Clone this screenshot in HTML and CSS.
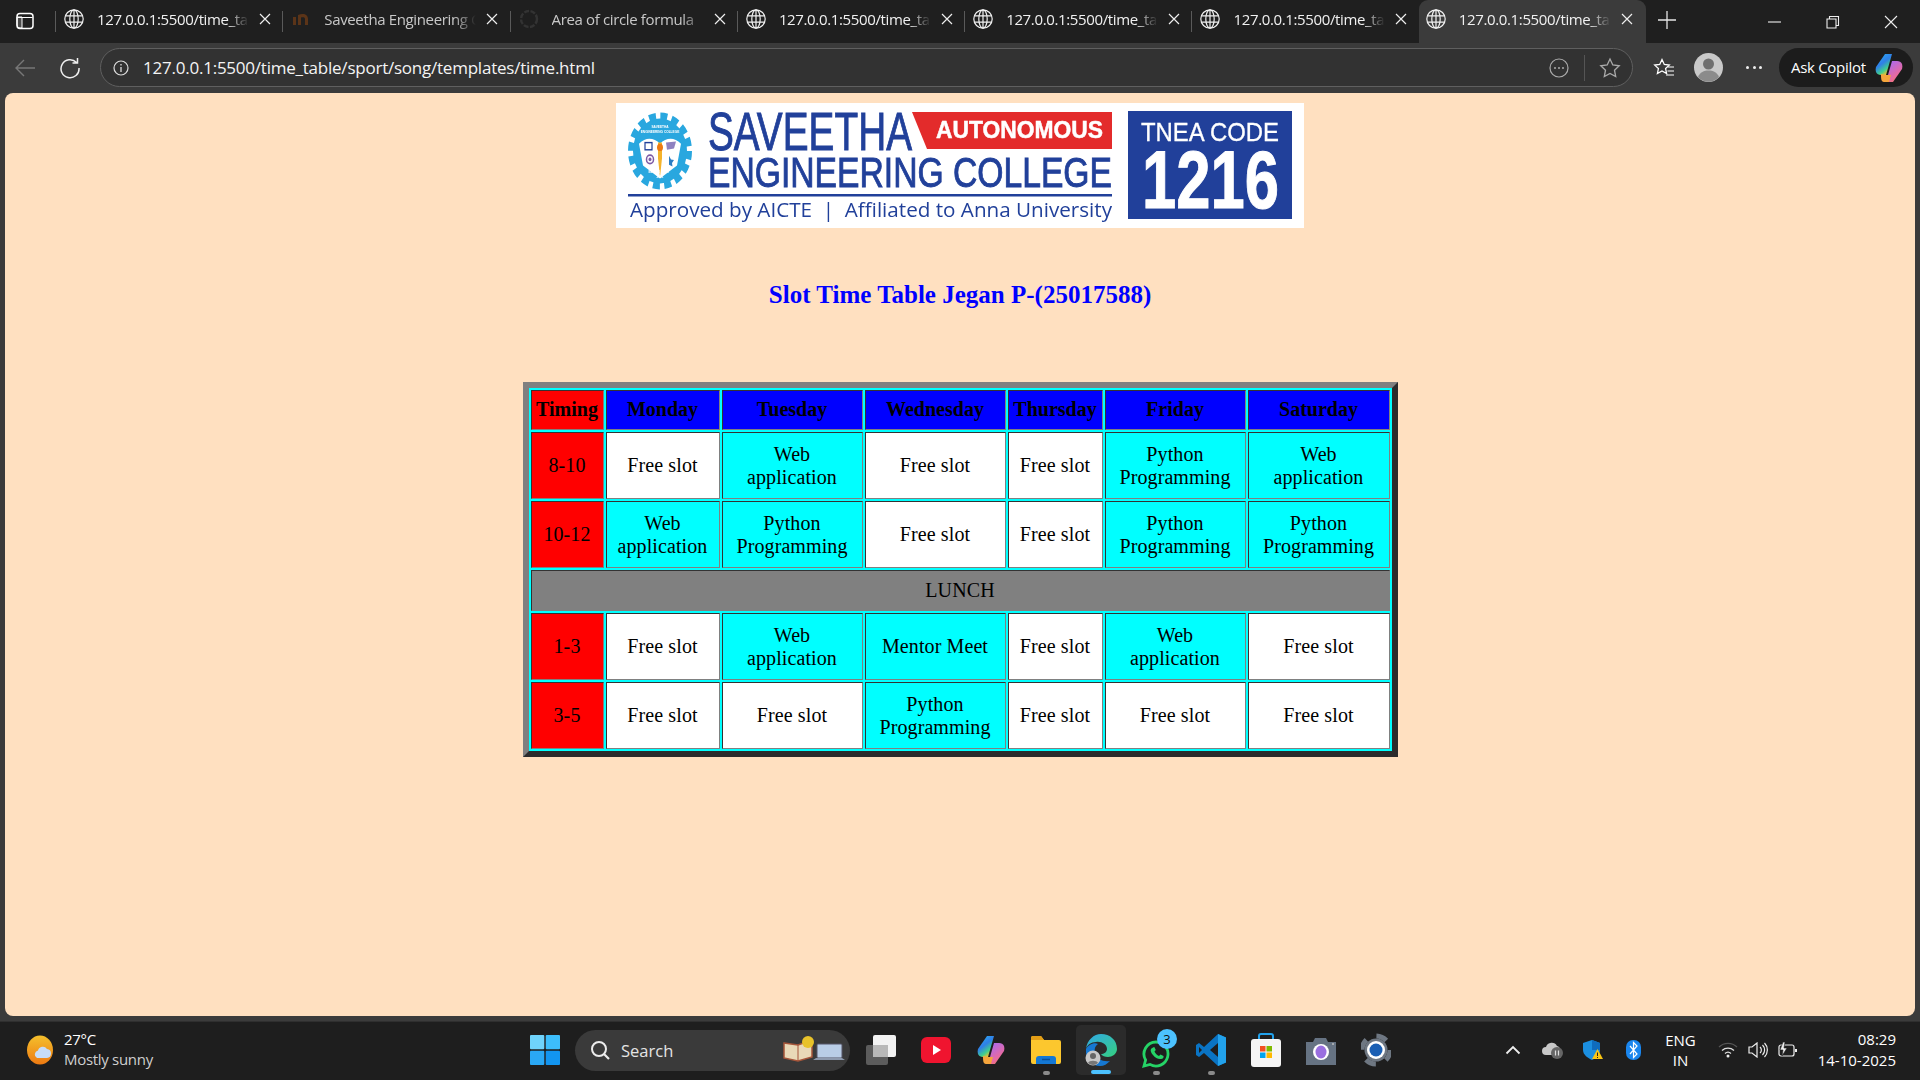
FILE: index.html
```html
<!DOCTYPE html>
<html lang="en">
<head>
<meta charset="utf-8">
<title>Slot Time Table</title>
<link rel="stylesheet" href="styles.css">
</head>
<body>
<svg class="defs" width="0" height="0" aria-hidden="true">
  <symbol id="globe" viewBox="0 0 20 20"><g fill="none" stroke="currentColor" stroke-width="1.2"><circle cx="10" cy="10" r="9.2"/><ellipse cx="10" cy="10" rx="4.2" ry="9.2"/><path d="M10 .8v18.4M1.4 6.8h17.2M1.4 13.2h17.2"/></g></symbol>
  <symbol id="close" viewBox="0 0 12 12"><path d="M1 1l10 10M11 1L1 11" fill="none" stroke="currentColor" stroke-width="1.2"/></symbol>
</svg>
<div class="app">
  <header class="tabstrip">
    <div class="winbtn"><svg width="18" height="18" viewBox="0 0 18 18"><rect x="1" y="1.5" width="16" height="15" rx="3" fill="none" stroke="#fff" stroke-width="1.5"/><path d="M1.5 5.5h15M1 5h5v11H4a3 3 0 0 1-3-3z" fill="#fff" fill-opacity=".2" stroke="#fff" stroke-width="1"/></svg></div>
    <div class="tab"><svg class="fav"><use href="#globe"/></svg><span class="tabtext">127.0.0.1:5500/time_table/sport</span><svg class="x"><use href="#close"/></svg></div>
    <div class="tab"><svg class="fav" viewBox="0 0 20 20"><path d="M2 16V8h3v8zM7 16V6c5-2 10-1 10 4v6h-3v-6c0-2-2-2-4-1.500V16z" fill="#5b3418"/></svg><span class="tabtext dimmed">Saveetha Engineering College</span><svg class="x"><use href="#close"/></svg></div>
    <div class="tab"><svg class="fav" viewBox="0 0 20 20"><circle cx="10" cy="10" r="8" fill="none" stroke="#333" stroke-width="2.500" stroke-dasharray="5 1.500"/></svg><span class="tabtext dimmed">Area of circle formula</span><svg class="x"><use href="#close"/></svg></div>
    <div class="tab"><svg class="fav"><use href="#globe"/></svg><span class="tabtext">127.0.0.1:5500/time_table/sport</span><svg class="x"><use href="#close"/></svg></div>
    <div class="tab"><svg class="fav"><use href="#globe"/></svg><span class="tabtext">127.0.0.1:5500/time_table/sport</span><svg class="x"><use href="#close"/></svg></div>
    <div class="tab"><svg class="fav"><use href="#globe"/></svg><span class="tabtext">127.0.0.1:5500/time_table/sport</span><svg class="x"><use href="#close"/></svg></div>
    <div class="tab active"><svg class="fav"><use href="#globe"/></svg><span class="tabtext">127.0.0.1:5500/time_table/sport</span><svg class="x"><use href="#close"/></svg></div>
    <div class="newtab"><svg width="18" height="18" viewBox="0 0 18 18"><path d="M9 0v18M0 9h18" stroke="#e6e6e6" stroke-width="1.300"/></svg></div>
    <div class="wincontrols">
      <svg width="14" height="14" viewBox="0 0 14 14"><path d="M0 7h13" stroke="#eee" stroke-width="1.100"/></svg>
      <svg width="14" height="14" viewBox="0 0 14 14"><path d="M1 4h9v9H1zM3.500 3.500V1.500h9v9h-2" fill="none" stroke="#eee" stroke-width="1.100"/></svg>
      <svg width="14" height="14" viewBox="0 0 14 14"><path d="M1 1l12 12M13 1L1 13" stroke="#eee" stroke-width="1.100"/></svg>
    </div>
  </header>

  <nav class="toolbar">
    <div class="navbtn"><svg width="22" height="20" viewBox="0 0 22 20"><path d="M21 10H2M10 2l-8 8 8 8" fill="none" stroke="#777" stroke-width="1.400"/></svg></div>
    <div class="navbtn"><svg width="22" height="22" viewBox="0 0 22 22"><path d="M17.500 5.500A9 9 0 1 0 20 11M18.500 1v5h-5" fill="none" stroke="#eee" stroke-width="1.500"/></svg></div>
    <div class="addressbar">
      <svg class="info" width="16" height="16" viewBox="0 0 16 16"><circle cx="8" cy="8" r="7" fill="none" stroke="#ddd" stroke-width="1.200"/><path d="M8 7v5M8 4v1.500" stroke="#ddd" stroke-width="1.300"/></svg>
      <span class="url">127.0.0.1:5500/time_table/sport/song/templates/time.html</span>
      <svg class="addr-more" width="20" height="20" viewBox="0 0 20 20"><circle cx="10" cy="10" r="9" fill="none" stroke="#aaa" stroke-width="1.200"/><circle cx="6" cy="10" r="1" fill="#aaa"/><circle cx="10" cy="10" r="1" fill="#aaa"/><circle cx="14" cy="10" r="1" fill="#aaa"/></svg>
      <span class="addr-sep"></span>
      <svg width="22" height="22" viewBox="0 0 22 22"><path d="M11 2l2.800 6 6.400.8-4.700 4.400 1.200 6.400L11 16.500l-5.700 3.100 1.200-6.400L1.800 8.800 8.200 8z" fill="none" stroke="#aaa" stroke-width="1.300"/></svg>
    </div>
    <div class="tool-fav"><svg width="22" height="22" viewBox="0 0 22 22"><path d="M9 2.500l2.300 5 5 .6-3.700 3.500 1 5L9 14l-4.600 2.600 1-5L1.700 8.100l5-.6z" fill="none" stroke="#fff" stroke-width="1.300"/><path d="M15 10h6M14.500 14h6.500M13 18h8" stroke="#fff" stroke-width="1.200"/></svg></div>
    <div class="profile"><svg width="29" height="29" viewBox="0 0 29 29"><circle cx="14.500" cy="14.500" r="14.500" fill="#c9c9c9"/><circle cx="14.500" cy="11" r="5.500" fill="#6f6f6f"/><path d="M4 24c2-5 6-6.500 10.500-6.500S23 19 25 24a14 14 0 0 1-21 0z" fill="#8b8b8b"/></svg></div>
    <div class="more"><i></i><i></i><i></i></div>
    <div class="copilot"><span>Ask Copilot</span>
      <svg width="28" height="30" viewBox="0 0 28 30"><defs><linearGradient id="cpA" x1="0" y1="0" x2=".6" y2="1"><stop offset="0" stop-color="#2bb6f3"/><stop offset=".5" stop-color="#2f7fe8"/><stop offset=".8" stop-color="#3fcf8e"/><stop offset="1" stop-color="#f7c22e"/></linearGradient><linearGradient id="cpB" x1=".4" y1="0" x2="1" y2="1"><stop offset="0" stop-color="#b06ae8"/><stop offset=".6" stop-color="#e86aa0"/><stop offset="1" stop-color="#f5803c"/></linearGradient></defs><path d="M10 1h7l-6 21H6C1 22 0 18 1 14z" fill="url(#cpA)"/><path d="M18 29h-7l6-21h5c5 0 6 4 5 8z" fill="url(#cpB)"/><path d="M6 21l5 1h5l-2 7H9c-3 0-3-4-3-8z" fill="#f5a53c"/></svg>
    </div>
  </nav>

  <main class="page">
    <svg class="logo" viewBox="0 0 688 125" role="img" aria-label="Saveetha Engineering College logo">
      <rect width="688" height="125" fill="#fff"/>
      <g transform="translate(44 48) scale(1 1.200)">
        <circle r="27" fill="#29a7df"/>
        <circle r="29" fill="none" stroke="#29a7df" stroke-width="6" stroke-dasharray="7 4.400"/>
        <path d="M-21-6C-14-12-6-11 0-6 6-11 14-12 21-6L17 12 0 23-17 12z" fill="#fff"/>
        <path d="M-2-7h4V6l-2 16-2-16z" fill="#f4b32b"/>
        <circle cy="-3" r="3" fill="#ee7a12"/>
        <rect x="-15" y="-7" width="7" height="6" fill="#fff" stroke="#21409a" stroke-width="1.200"/>
        <circle cx="-10" cy="7" r="3.500" fill="none" stroke="#7d5ba6" stroke-width="1.500"/>
        <circle cx="-10" cy="7" r="1.500" fill="#7d5ba6"/>
        <path d="M6-7l10-1-2 6-7 1z" fill="#8f82c0"/>
        <path d="M9 4l2 3 3 .5-2 2.500.5 3-3.500-1.500z" fill="#2c7dc4"/>
        <text class="logo-tiny" y="-19.500" text-anchor="middle">SAVEETHA</text>
        <text class="logo-tiny" y="-15" text-anchor="middle">ENGINEERING COLLEGE</text>
        <text class="logo-tiny" y="18" x="-1" text-anchor="middle">BE THE BEST</text>
        <text class="logo-tiny" y="22.500" text-anchor="middle">2021</text>
      </g>
      <text class="logo-name" x="92" y="47" font-size="53" textLength="204" lengthAdjust="spacingAndGlyphs">SAVEETHA</text>
      <path d="M296 9h200v37H311z" fill="#e32b2b"/>
      <text class="logo-auto" x="320" y="35" font-size="24" textLength="167" lengthAdjust="spacingAndGlyphs">AUTONOMOUS</text>
      <text class="logo-name" x="92" y="84" font-size="43" textLength="404" lengthAdjust="spacingAndGlyphs">ENGINEERING COLLEGE</text>
      <rect x="12" y="91" width="484" height="2.500" fill="#21409a"/>
      <text class="logo-sub" x="14" y="114" font-size="20" textLength="482" lengthAdjust="spacingAndGlyphs">Approved by AICTE  |  Affiliated to Anna University</text>
      <rect x="512" y="8" width="164" height="108" fill="#21409a"/>
      <text class="logo-tnea" x="525" y="38" font-size="25" textLength="138" lengthAdjust="spacingAndGlyphs">TNEA CODE</text>
      <text class="logo-code" x="526" y="105" font-size="81" textLength="137" lengthAdjust="spacingAndGlyphs">1216</text>
    </svg>
    <h2 class="title">Slot Time Table Jegan P-(25017588)</h2>
    <table class="timetable">
      <colgroup><col class="c-time"><col class="c-mon"><col class="c-wide"><col class="c-wide"><col class="c-thu"><col class="c-wide"><col class="c-sat"></colgroup>
      <tr class="head"><th class="red">Timing</th><th>Monday</th><th>Tuesday</th><th>Wednesday</th><th>Thursday</th><th>Friday</th><th>Saturday</th></tr>
      <tr><td class="red">8-10</td><td class="free">Free slot</td><td class="busy">Web application</td><td class="free">Free slot</td><td class="free">Free slot</td><td class="busy">Python Programming</td><td class="busy">Web application</td></tr>
      <tr><td class="red">10-12</td><td class="busy">Web application</td><td class="busy">Python Programming</td><td class="free">Free slot</td><td class="free">Free slot</td><td class="busy">Python Programming</td><td class="busy">Python Programming</td></tr>
      <tr class="lunchrow"><td class="lunch" colspan="7">LUNCH</td></tr>
      <tr><td class="red">1-3</td><td class="free">Free slot</td><td class="busy">Web application</td><td class="busy">Mentor Meet</td><td class="free">Free slot</td><td class="busy">Web application</td><td class="free">Free slot</td></tr>
      <tr><td class="red">3-5</td><td class="free">Free slot</td><td class="free">Free slot</td><td class="busy">Python Programming</td><td class="free">Free slot</td><td class="free">Free slot</td><td class="free">Free slot</td></tr>
    </table>
  </main>

  <footer class="taskbar">
    <div class="weather">
      <svg width="30" height="30" viewBox="0 0 30 30"><defs><linearGradient id="sun" x1="0" y1="0" x2="0" y2="1"><stop offset="0" stop-color="#f4c02c"/><stop offset="1" stop-color="#ee7a12"/></linearGradient></defs><ellipse cx="14" cy="15" rx="13" ry="14.500" fill="url(#sun)"/><path d="M11 23a4 4 0 0 1 1-7.500 5 5 0 0 1 9-1.500 4.500 4.500 0 0 1 4 4.500 4.500 4.500 0 0 1-4 4.500z" fill="#c7ddf7"/></svg>
      <div class="wtext"><span class="temp">27°C</span><span class="cond">Mostly sunny</span></div>
    </div>
    <div class="slot"><svg width="30" height="30" viewBox="0 0 30 30"><rect width="14.300" height="14.300" rx="1" fill="#6fd3fb"/><rect x="15.700" width="14.300" height="14.300" rx="1" fill="#3dbefb"/><rect y="15.700" width="14.300" height="14.300" rx="1" fill="#2aa8f5"/><rect x="15.700" y="15.700" width="14.300" height="14.300" rx="1" fill="#1295f0"/></svg></div>
    <div class="search">
      <svg width="22" height="22" viewBox="0 0 22 22"><circle cx="10" cy="10" r="7" fill="none" stroke="#ececec" stroke-width="2"/><path d="M15 15l5 5" stroke="#ececec" stroke-width="2.200"/></svg>
      <span>Search</span>
      <svg class="search-art" width="64" height="30" viewBox="0 0 64 30"><path d="M2 8l14 2 14-5v17l-14 4-14-3z" fill="#e9d9b8" stroke="#a5553a" stroke-width="1.500"/><path d="M16 10v16" stroke="#a5553a"/><circle cx="26" cy="7" r="6" fill="#e8c22a"/><rect x="35" y="9" width="25" height="14" rx="1" fill="#b9cde6" stroke="#556" stroke-width="1"/><path d="M31 25h32l-3-2H34z" fill="#8d99ad"/></svg>
    </div>
    <div class="slot"><svg width="32" height="32" viewBox="0 0 32 32"><rect x="1" y="11" width="22" height="20" rx="2" fill="#5c5c5c"/><rect x="8" y="1" width="23" height="22" rx="2" fill="#f2f2f2"/><rect x="8" y="11" width="15" height="12" fill="#b8b8b8"/></svg></div>
    <div class="slot"><svg width="30" height="26" viewBox="0 0 30 26"><rect width="30" height="26" rx="6" fill="#f0142f"/><path d="M12 8l8 5-8 5z" fill="#fff"/></svg></div>
    <div class="slot"><svg width="28" height="30" viewBox="0 0 28 30"><path d="M10 1h7l-6 21H6C1 22 0 18 1 14z" fill="url(#cpA)"/><path d="M18 29h-7l6-21h5c5 0 6 4 5 8z" fill="url(#cpB)"/><path d="M6 21l5 1h5l-2 7H9c-3 0-3-4-3-8z" fill="#f5a53c"/></svg></div>
    <div class="slot dot"><svg width="30" height="28" viewBox="0 0 30 28"><path d="M0 2a2 2 0 0 1 2-2h8l3 4h15a2 2 0 0 1 2 2v20a2 2 0 0 1-2 2H2a2 2 0 0 1-2-2z" fill="#fcc72e"/><path d="M0 2a2 2 0 0 1 2-2h8l3 4h-13z" fill="#e39e16"/><path d="M5 28v-5a3 3 0 0 1 3-3h14a3 3 0 0 1 3 3v5z" fill="#1478d4"/><path d="M11 23.500h8" stroke="#0b4f99" stroke-width="1.500"/></svg></div>
    <div class="slot current"><svg width="32" height="32" viewBox="0 0 32 32"><defs><linearGradient id="edge" x1="0" y1="0" x2="1" y2="1"><stop offset="0" stop-color="#31a8e8"/><stop offset="1" stop-color="#35d07f"/></linearGradient></defs><path d="M1 15C2 6 9 0 16 0c9 0 16 6 16 15 0 5-5 8-9 8-3 0-6-1-7-3 3 0 6-2 6-5 0-5-6-8-11-7C6 8 2 11 1 15z" fill="url(#edge)"/><path d="M1 15c2-4 8-7 12-5-3 2-4 5-3 9 1 6 8 9 15 8-3 3-6 5-10 5C7 32 0 25 1 15z" fill="#1678d2"/><circle cx="8" cy="24" r="7.500" fill="#c8c8c8"/><circle cx="8" cy="22" r="3" fill="#666"/><path d="M3 29c1-3 9-3 10 0a7 7 0 0 1-10 0z" fill="#777"/></svg></div>
    <div class="slot dot"><svg class="wa" width="30" height="30" viewBox="0 0 30 30"><path d="M15 3a12 12 0 1 1-6 22.400L3 27l1.600-6A12 12 0 0 1 15 3z" fill="none" stroke="#25d366" stroke-width="2.800"/><path d="M10 10c-2 3 5 11 10 10 2 0 3-2 2.500-3l-3-1.500-1.500 1.500c-2-1-3.500-2.500-4.500-4.500l1.300-1.500-1.500-3c-1 0-2.300 1-3.300 2z" fill="#25d366"/></svg><span class="badge">3</span></div>
    <div class="slot dot"><svg width="30" height="32" viewBox="0 0 30 32"><path d="M22 0l8 3.500v25L22 32 8 19l-5 4-3-2V11l3-2 5 4z" fill="#0a74c4"/><path d="M22 0l8 3.500v25L22 32z" fill="#22a2ec"/><path d="M22 9l-8 7 8 7z" fill="#1e1e1e"/><path d="M3 13v6l3-3z" fill="#1e1e1e"/></svg></div>
    <div class="slot"><svg width="30" height="34" viewBox="0 0 30 34"><path d="M8 9V3a2 2 0 0 1 2-2h10a2 2 0 0 1 2 2v6" fill="none" stroke="#22a2ec" stroke-width="2"/><rect y="6" width="30" height="28" rx="3" fill="#f5f5f5"/><rect x="9" y="13" width="5.500" height="5.500" fill="#f25022"/><rect x="15.500" y="13" width="5.500" height="5.500" fill="#7fba00"/><rect x="9" y="19.500" width="5.500" height="5.500" fill="#00a4ef"/><rect x="15.500" y="19.500" width="5.500" height="5.500" fill="#ffb900"/></svg></div>
    <div class="slot"><svg width="30" height="30" viewBox="0 0 30 30"><path d="M0 7h7l2-4h11l2 4h8v23H0z" fill="#667383"/><circle cx="15" cy="17" r="8" fill="#fff"/><ellipse cx="15" cy="17" rx="5.500" ry="6.500" fill="#9a6fe0"/><circle cx="27" cy="9" r="1" fill="#bbb"/></svg></div>
    <div class="slot"><svg width="30" height="34" viewBox="-15 -17 30 34"><circle r="11.500" fill="#6e7782"/><circle r="14" fill="none" stroke="#6e7782" stroke-width="5" stroke-dasharray="11 11"/><circle r="9" fill="#fff"/><circle r="6.500" fill="#1a5fb4"/></svg></div>

    <div class="tray">
      <div class="trayslot"><svg width="16" height="10" viewBox="0 0 16 10"><path d="M1.500 8.500L8 2l6.500 6.500" fill="none" stroke="#eee" stroke-width="1.800"/></svg></div>
      <div class="trayslot"><svg width="22" height="18" viewBox="0 0 22 18"><path d="M4 14a4 4 0 0 1 0-8 6 6 0 0 1 11-1 4 4 0 0 1 3 4v5z" fill="#c8c8c8"/><circle cx="15" cy="12" r="6" fill="#666"/><path d="M13.500 9.500v5M16.500 9.500v5" stroke="#ddd" stroke-width="1.200"/></svg></div>
      <div class="trayslot"><svg width="20" height="20" viewBox="0 0 20 20"><path d="M9 0l8 3v7c0 5-4 8-8 10-4-2-9-5-9-10V3z" fill="#1b8fe0"/><path d="M9 0l8 3v7H9z" fill="#0f6cbd"/><path d="M14.500 9l5.500 10H9z" fill="#f9c513"/><path d="M14.500 12.500v3.500M14.500 17v1" stroke="#222" stroke-width="1"/></svg></div>
      <div class="trayslot"><svg width="15" height="20" viewBox="0 0 15 20"><rect width="15" height="20" rx="7" fill="#1a86ee"/><path d="M4 6l7 8-3.500 3.500V2.500L11 6l-7 8" fill="none" stroke="#fff" stroke-width="1.200"/></svg></div>
      <div class="lang"><span>ENG</span><span>IN</span></div>
      <div class="trayicons">
        <svg width="20" height="16" viewBox="0 0 20 16"><path d="M1 5a13 13 0 0 1 18 0" fill="none" stroke="#555" stroke-width="1.300"/><path d="M4 8.500a9 9 0 0 1 12 0M7 11.500a4.500 4.500 0 0 1 6 0" fill="none" stroke="#e0e0e0" stroke-width="1.300"/><circle cx="10" cy="14" r="1.500" fill="#eee"/></svg>
        <svg width="20" height="16" viewBox="0 0 20 16"><path d="M1 5h3l5-4v14l-5-4H1z" fill="none" stroke="#eee" stroke-width="1.200"/><path d="M12 5a4 4 0 0 1 0 6M14.500 3a7 7 0 0 1 0 10M16.500 1a10 10 0 0 1 0 14" fill="none" stroke="#eee" stroke-width="1.200"/></svg>
        <svg width="20" height="16" viewBox="0 0 20 16"><rect x="1" y="3" width="15" height="11" rx="2" fill="none" stroke="#eee" stroke-width="1.200"/><path d="M17 7h2v3h-2z" fill="#eee"/><path d="M5 0L2 8h3l-1 6 5-8H6l1-6z" fill="#eee" stroke="#1e1e1e" stroke-width=".6"/></svg>
      </div>
      <div class="clock"><span>08:29</span><span>14-10-2025</span></div>
    </div>
  </footer>
</div>
</body>
</html>
```
FILE: styles.css
```css
* { box-sizing: border-box; }
html, body { margin: 0; height: 100%; overflow: hidden; background: #3b3b3b; }
body { font-family: "Open Sans", "Noto Sans", sans-serif; color: #fff; }
.defs { position: absolute; }
.app { display: flex; flex-direction: column; height: 1080px; }

/* tab strip */
.tabstrip { height: 43px; flex: none; display: flex; align-items: stretch; background: #1f1f1f; }
.winbtn { width: 55px; flex: none; display: flex; align-items: center; padding-left: 16px; }
.winbtn svg { margin-top: -2px; }
.tab { width: 227.3px; flex: none; position: relative; display: flex; align-items: center; padding: 0 12px 5px 8px; color: #fff; }
.tab::before { content: ""; position: absolute; left: 0; top: 11px; height: 21px; width: 1px; background: #5a5a5a; }
.tab.active { padding-left: 6px; background: #3b3b3b; border-radius: 9px 9px 0 0; }
.tab.active::before { display: none; }
.fav { width: 20px; height: 20px; flex: none; margin-left: 1px; color: #f0f0f0; }
.tabtext { width: 155px; flex: none; margin-left: 13px; font-size: 15px; letter-spacing: -.36px; white-space: nowrap; overflow: hidden; -webkit-mask-image: linear-gradient(90deg, #000 84%, transparent 98%); mask-image: linear-gradient(90deg, #000 84%, transparent 98%); color: #f0f0f0; }
.tabtext.dimmed { color: #c8c8c8; }
.x { width: 12px; height: 12px; flex: none; margin-left: 7px; color: #eee; }
.newtab { width: 42px; flex: none; display: flex; align-items: center; justify-content: center; padding-bottom: 3px; }
.wincontrols { margin-left: auto; display: flex; align-items: center; gap: 44px; padding: 0 22px 0 0; }

/* toolbar */
.toolbar { height: 50px; flex: none; display: flex; align-items: center; background: #3b3b3b; padding-bottom: 1px; }
.navbtn { width: 45px; flex: none; display: flex; justify-content: center; }
.navbtn:first-child { margin-left: 2px; }
.addressbar { width: 1533px; margin-left: 8px; flex: none; height: 39px; border: 1px solid #5f5f5f; border-radius: 20px; background: #323232; display: flex; align-items: center; padding: 0 11px 0 12px; }
.info { flex: none; }
.url { margin-left: 14px; font-size: 17px; letter-spacing: -.23px; color: #f4f4f4; }
.addr-more { margin-left: auto; }
.addr-sep { width: 1px; height: 26px; background: #555; margin: 0 14px 0 15px; }
.tool-fav { margin-left: 20px; flex: none; width: 22px; height: 22px; display: flex; }
.profile { margin-left: 19px; flex: none; height: 29px; }
.more { margin-left: 23px; width: 16px; flex: none; display: flex; justify-content: space-between; }
.more i { width: 3px; height: 3px; border-radius: 50%; background: #eee; }
.copilot { margin-left: 17px; width: 134px; height: 39px; flex: none; border-radius: 20px; background: #1c1c1c; display: flex; align-items: center; padding-left: 12px; gap: 9px; font-size: 15px; letter-spacing: -.3px; }
.copilot span { margin-top: -2px; }

/* page */
.page { flex: none; height: 923px; margin: 0 5px; background: #ffe0c0; border-radius: 8px; padding-top: 10px; display: flex; flex-direction: column; align-items: center; }
.logo { display: block; width: 688px; height: 125px; flex: none; filter: blur(.35px); }
.logo-tiny { font: 700 3.200px "Liberation Sans", sans-serif; fill: #fff; }
.logo-name { font-family: "Liberation Sans", sans-serif; fill: #21409a; stroke: #21409a; stroke-width: .9px; }
.logo-auto { font-family: "Liberation Sans", sans-serif; font-weight: 700; fill: #fff; stroke: #fff; stroke-width: .5px; }
.logo-sub { font-family: "Open Sans", sans-serif; fill: #21409a; white-space: pre; }
.logo-tnea { font-family: "Liberation Sans", sans-serif; fill: #fff; stroke: #fff; stroke-width: .3px; }
.logo-code { font-family: "Liberation Sans", sans-serif; font-weight: 700; fill: #fff; stroke: #fff; stroke-width: 1px; }
.title { margin: 53px 0 0; height: 27px; font: 700 25px/27px "Liberation Serif", "Times New Roman", serif; color: #00f; text-align: center; }

/* timetable */
.timetable { margin-top: 74px; width: 875px; table-layout: fixed; border-collapse: separate; border-spacing: 2px; border-width: 6px; border-style: solid; border-color: #808080 #2c2c2c #2c2c2c #808080; background: #0ff; color: #000; font: 20px/23px "Liberation Serif", "Times New Roman", serif; flex: none; }
.c-time { width: 73px; } .c-mon { width: 114px; } .c-wide { width: 141px; } .c-thu { width: 95px; } .c-sat { width: 142px; }
.timetable th { padding: 0 2px 2px; height: 67px; text-align: center; vertical-align: middle; border-width: 1px; border-style: solid; border-color: #333 #808080 #808080 #333; }
.timetable td { padding: 0 6px; height: 67px; text-align: center; vertical-align: middle; letter-spacing: .1px; border-width: 1px; border-style: solid; border-color: #333 #808080 #808080 #333; }
.timetable .head th { height: 40px; background: #00f; font-weight: 700; }
.timetable .head th.red, .timetable td.red { background: #f00; }
.timetable td.free { background: #fff; }
.timetable td.busy { background: #0ff; }
.timetable td.lunch { height: 41px; background: #808080; }

/* taskbar */
.taskbar { position: relative; margin-top: 5px; height: 59px; flex: none; display: flex; align-items: center; background: #1e1e1e; border-top: 1px solid #2f2f2f; font-size: 15px; padding-bottom: 2px; }
.weather { width: 517px; flex: none; display: flex; align-items: center; padding-left: 26px; gap: 8px; }
.wtext { display: flex; flex-direction: column; line-height: 20px; margin-top: -2px; }
.temp { color: #fff; letter-spacing: -.3px; }
.cond { color: #cfcfcf; letter-spacing: -.3px; }
.slot { width: 55px; height: 50px; flex: none; display: flex; align-items: center; justify-content: center; position: relative; }
.slot.dot::after { content: ""; position: absolute; left: 50%; margin-left: -3px; bottom: 0; width: 7px; height: 4px; border-radius: 2px; background: #8a8a8a; }
.slot.current { width: 50px; margin: 0 2.500px; background: #2b2b2b; border-radius: 5px; }
.slot.current::after { content: ""; position: absolute; left: 50%; margin-left: -10px; bottom: 1px; width: 20px; height: 4px; border-radius: 2px; background: #4cc2ff; }
.badge { position: absolute; right: 6px; top: 4px; width: 20px; height: 20px; border-radius: 50%; background: #4cc2ff; color: #111; font-size: 13px; line-height: 20px; text-align: center; }
.wa { margin-top: 8px; }
.search { width: 275px; height: 41px; flex: none; margin: 0 3px 0 3px; border-radius: 21px; background: #3a3a3a; display: flex; align-items: center; padding-left: 14px; gap: 10px; font-size: 16.500px; color: #e4e4e4; }
.search-art { margin-left: auto; margin-right: 4px; }
.tray { margin-left: auto; display: flex; align-items: center; height: 100%; padding-right: 24px; }
.trayslot { width: 40px; flex: none; display: flex; justify-content: center; }
.trayslot:first-child { margin-left: 1px; }
.lang { width: 55px; flex: none; display: flex; flex-direction: column; align-items: center; line-height: 20px; }
.trayicons { width: 100px; flex: none; display: flex; justify-content: center; gap: 10px; }
.clock { width: 88px; flex: none; display: flex; flex-direction: column; align-items: flex-end; line-height: 21px; }
```
